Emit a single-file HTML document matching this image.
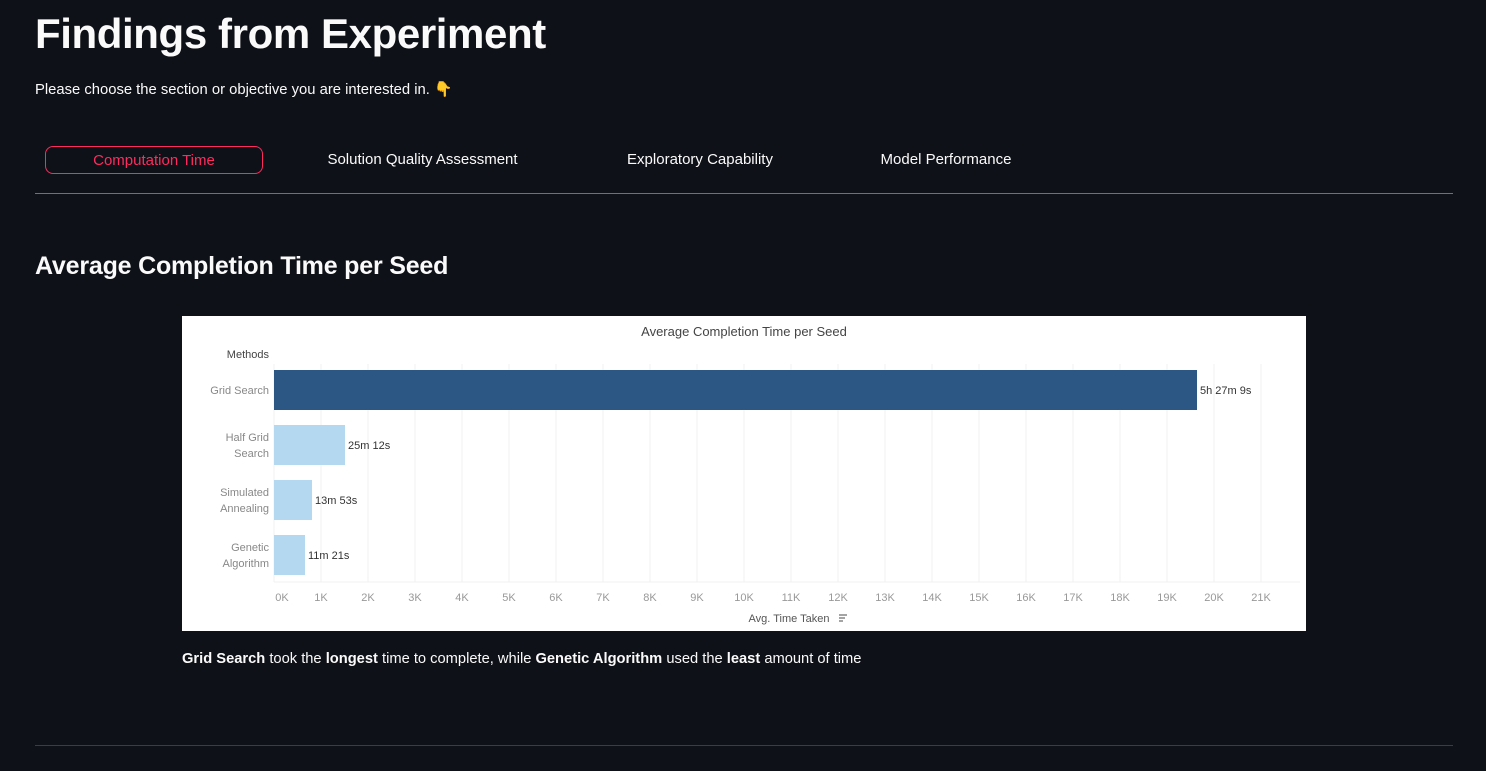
<!DOCTYPE html>
<html><head><meta charset="utf-8"><style>
body{margin:0;width:1486px;height:771px;background:#0e1117;color:#fafafa;font-family:"Liberation Sans",sans-serif;position:relative;overflow:hidden}
.a{position:absolute;white-space:nowrap}
.tab{position:absolute;top:146px;height:26px;line-height:28px;font-size:15px;color:#fafafa;text-align:center}
svg text{font-family:"Liberation Sans",sans-serif}
</style></head><body>
<div class="a" style="left:35px;top:10px;font-size:42px;font-weight:bold;letter-spacing:-0.4px">Findings from Experiment</div>
<div class="a" style="left:35px;top:80px;font-size:14.8px">Please choose the section or objective you are interested in. <span style="color:#f5b82e">👇</span></div>
<div class="tab" style="left:45px;width:216px;border:1px solid #ff2b5e;border-radius:8px;color:#ff2b5e">Computation Time</div>
<div class="tab" style="left:310px;width:225px">Solution Quality Assessment</div>
<div class="tab" style="left:610px;width:180px">Exploratory Capability</div>
<div class="tab" style="left:865px;width:162px">Model Performance</div>
<div class="a" style="left:35px;top:193px;width:1418px;height:1px;background:#a85a5a"></div>
<div class="a" style="left:35px;top:252px;font-size:25px;font-weight:bold;letter-spacing:-0.2px">Average Completion Time per Seed</div>
<svg class="a" style="left:182px;top:316px" width="1124" height="315" viewBox="182 316 1124 315">
<rect x="182" y="316" width="1124" height="315" fill="#fff"/>
<g stroke="#f0f0f0" stroke-width="1">
<line x1="321" y1="364" x2="321" y2="582"/><line x1="368" y1="364" x2="368" y2="582"/><line x1="415" y1="364" x2="415" y2="582"/><line x1="462" y1="364" x2="462" y2="582"/><line x1="509" y1="364" x2="509" y2="582"/><line x1="556" y1="364" x2="556" y2="582"/><line x1="603" y1="364" x2="603" y2="582"/><line x1="650" y1="364" x2="650" y2="582"/><line x1="697" y1="364" x2="697" y2="582"/><line x1="744" y1="364" x2="744" y2="582"/><line x1="791" y1="364" x2="791" y2="582"/><line x1="838" y1="364" x2="838" y2="582"/><line x1="885" y1="364" x2="885" y2="582"/><line x1="932" y1="364" x2="932" y2="582"/><line x1="979" y1="364" x2="979" y2="582"/><line x1="1026" y1="364" x2="1026" y2="582"/><line x1="1073" y1="364" x2="1073" y2="582"/><line x1="1120" y1="364" x2="1120" y2="582"/><line x1="1167" y1="364" x2="1167" y2="582"/><line x1="1214" y1="364" x2="1214" y2="582"/><line x1="1261" y1="364" x2="1261" y2="582"/>
<line x1="274" y1="582" x2="1300" y2="582"/><line x1="274" y1="364" x2="274" y2="582"/>
</g>
<text x="744" y="336" text-anchor="middle" font-size="13" fill="#444">Average Completion Time per Seed</text>
<text x="269" y="358" text-anchor="end" font-size="11" fill="#444">Methods</text>
<rect x="274" y="370" width="923" height="40" fill="#2c5784"/>
<rect x="274" y="425" width="71" height="40" fill="#b3d8ef"/>
<rect x="274" y="480" width="38" height="40" fill="#b3d8ef"/>
<rect x="274" y="535" width="31" height="40" fill="#b3d8ef"/>
<g font-size="11" fill="#888" text-anchor="end">
<text x="269" y="394">Grid Search</text>
<text x="269" y="441">Half Grid</text><text x="269" y="457">Search</text>
<text x="269" y="496">Simulated</text><text x="269" y="512">Annealing</text>
<text x="269" y="551">Genetic</text><text x="269" y="567">Algorithm</text>
</g>
<g font-size="11" fill="#333">
<text x="1200" y="394">5h 27m 9s</text><text x="348" y="449">25m 12s</text><text x="315" y="504">13m 53s</text><text x="308" y="559">11m 21s</text>
</g>
<g font-size="11" fill="#999" text-anchor="middle">
<text x="282" y="601">0K</text><text x="321" y="601">1K</text><text x="368" y="601">2K</text><text x="415" y="601">3K</text><text x="462" y="601">4K</text><text x="509" y="601">5K</text><text x="556" y="601">6K</text><text x="603" y="601">7K</text><text x="650" y="601">8K</text><text x="697" y="601">9K</text><text x="744" y="601">10K</text><text x="791" y="601">11K</text><text x="838" y="601">12K</text><text x="885" y="601">13K</text><text x="932" y="601">14K</text><text x="979" y="601">15K</text><text x="1026" y="601">16K</text><text x="1073" y="601">17K</text><text x="1120" y="601">18K</text><text x="1167" y="601">19K</text><text x="1214" y="601">20K</text><text x="1261" y="601">21K</text>
</g>
<text x="789" y="622" text-anchor="middle" font-size="11" fill="#555">Avg. Time Taken</text>
<g stroke="#666" stroke-width="1.2"><line x1="839" y1="615" x2="847" y2="615"/><line x1="839" y1="618" x2="845" y2="618"/><line x1="839" y1="621" x2="843" y2="621"/></g>
</svg>
<div class="a" style="left:182px;top:651px;font-size:14.7px">
<b>Grid Search</b> took the <b>longest</b> time to complete, while <b>Genetic Algorithm</b> used the <b>least</b> amount of time</div>
<div class="a" style="left:35px;top:745px;width:1418px;height:1px;background:#3a3d45"></div>
</body></html>
